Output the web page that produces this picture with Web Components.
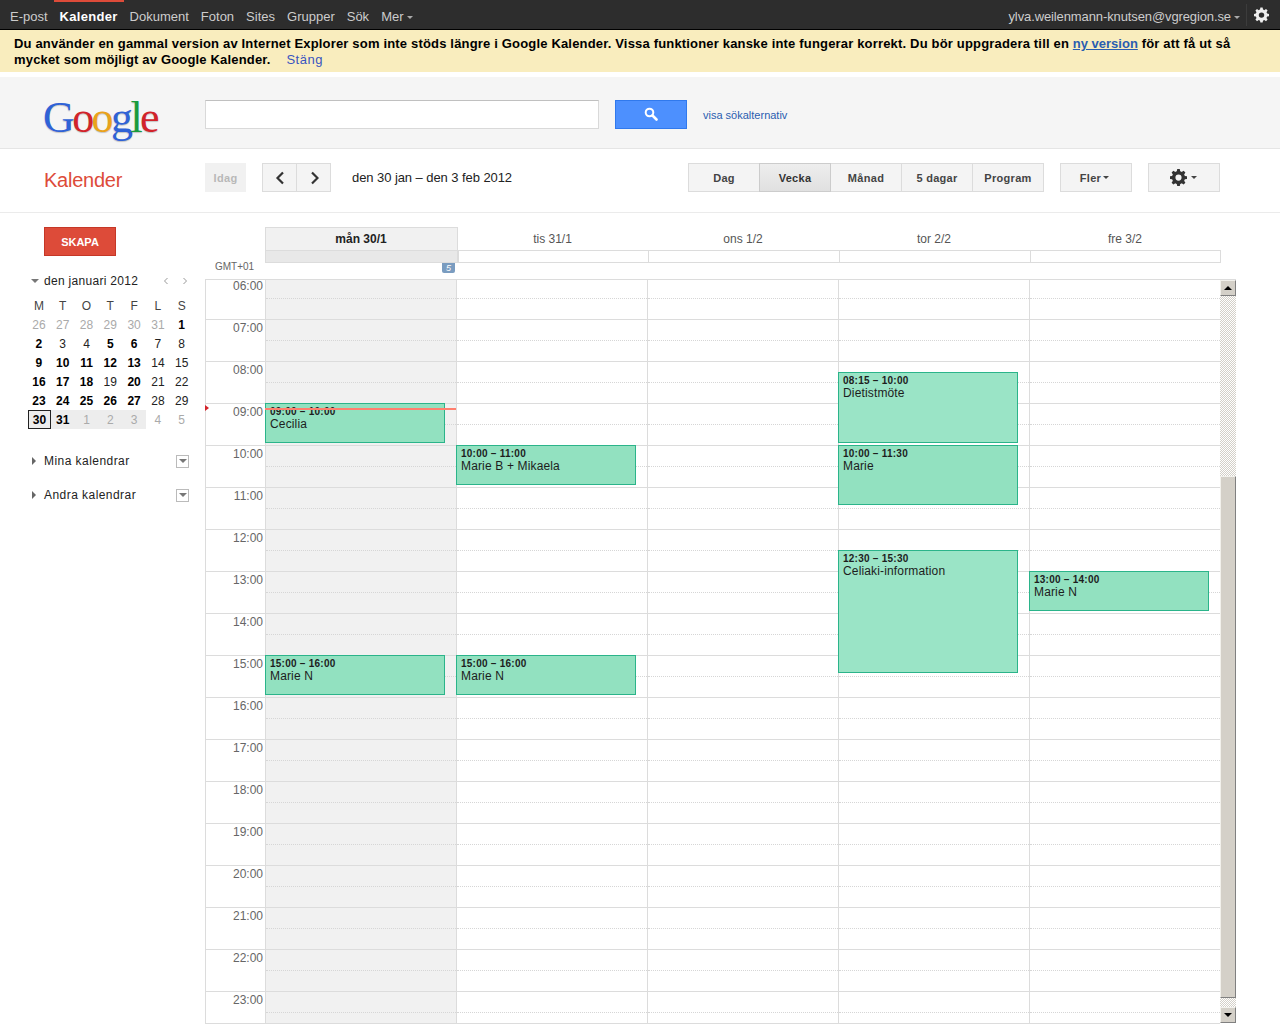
<!DOCTYPE html>
<html lang="sv">
<head>
<meta charset="utf-8">
<title>Google Kalender</title>
<style>
  html, body { margin: 0; padding: 0; background: #fff; }
  body { width: 1280px; height: 1024px; overflow: hidden; font-family: "Liberation Sans", Arial, sans-serif; }
</style>
</head>
<body>
<top-bar></top-bar>
<notice-bar></notice-bar>
<search-header></search-header>
<nav-toolbar></nav-toolbar>
<main-area>
  <side-panel></side-panel>
  <week-view></week-view>
</main-area>

<script>
const GEAR = 'M8.2 0h-2.4l-.4 2.1c-.5.2-1 .4-1.4.7L2.2 1.6.5 3.3l1.2 1.8c-.3.4-.5.9-.7 1.4L-1 6.9v2.4l2 .4c.2.5.4 1 .7 1.4L.5 12.9l1.7 1.7 1.8-1.2c.4.3.9.5 1.4.7l.4 2h2.4l.4-2c.5-.2 1-.4 1.4-.7l1.8 1.2 1.7-1.7-1.2-1.8c.3-.4.5-.9.7-1.4l2-.4V6.9l-2-.4c-.2-.5-.4-1-.7-1.4l1.2-1.8-1.7-1.7L10 2.8c-.4-.3-.9-.5-1.4-.7zM7 5.2a2.9 2.9 0 1 1 0 5.8 2.9 2.9 0 0 1 0-5.8z';

class TopBar extends HTMLElement {
  connectedCallback() {
    const links = ['E-post', 'Kalender', 'Dokument', 'Foton', 'Sites', 'Grupper', 'Sök'];
    this.attachShadow({ mode: 'open' }).innerHTML = `
      <style>
        :host { display: flex; justify-content: space-between; align-items: center; height: 29px; background: #2d2d2d; border-bottom: 1px solid #000; color: #ccc; font-size: 13px; padding: 0 0 0 10px; box-sizing: content-box; position: relative; width: 1270px; }
        .links { display: flex; gap: 12px; align-items: center; padding-top: 4px; }
        .links span.on { color: #fff; font-weight: bold; position: relative; letter-spacing: .3px; }
        .links span.on::before { content: ''; position: absolute; left: -6px; right: -6px; top: -9px; height: 2px; background: #dd4b39; }
        .caret { display: inline-block; width: 0; height: 0; border: 3px solid transparent; border-top-color: #aaa; border-bottom: 0; margin-left: 3px; vertical-align: 2px; }
        .right { display: flex; align-items: center; padding-top: 4px; }
        .mail { letter-spacing: -.11px; }
        .sep { width: 1px; height: 22px; background: #3c3c3c; margin: -4px 7px 0 6px; }
        svg { display: block; margin: -4px 11px 0 0; }
      </style>
      <div class="links">
        ${links.map(l => `<span class="${l === 'Kalender' ? 'on' : ''}">${l}</span>`).join('')}
        <span>Mer<i class="caret"></i></span>
      </div>
      <div class="right">
        <span class="mail">ylva.weilenmann-knutsen@vgregion.se<i class="caret"></i></span>
        <div class="sep"></div>
        <svg width="15" height="16" viewBox="-1 0 16 16"><path fill="#eee" fill-rule="evenodd" d="${GEAR}"/></svg>
      </div>`;
  }
}

class NoticeBar extends HTMLElement {
  connectedCallback() {
    this.attachShadow({ mode: 'open' }).innerHTML = `
      <style>
        :host { display: block; box-sizing: border-box; height: 42px; margin-bottom: 5px; padding: 6px 14px 0; background: #f9edbe; color: #000; font-size: 13px; line-height: 16px; font-weight: bold; letter-spacing: .175px; }
        a { color: #2a5db0; letter-spacing: 0; }
        .close { text-decoration: none; color: #3a55c0; font-weight: normal; margin-left: 12px; letter-spacing: .5px; }
        .line { white-space: nowrap; }
      </style>
      <div class="line">Du använder en gammal version av Internet Explorer som inte stöds längre i Google Kalender. Vissa funktioner kanske inte fungerar korrekt. Du bör uppgradera till en <a href="#">ny version</a> för att få ut så</div>
      <div class="line">mycket som möjligt av Google Kalender. <a class="close" href="#">Stäng</a></div>`;
  }
}

class SearchHeader extends HTMLElement {
  connectedCallback() {
    this.attachShadow({ mode: 'open' }).innerHTML = `
      <style>
        :host { display: flex; align-items: center; box-sizing: border-box; height: 72px; background: #f5f5f5; border-bottom: 1px solid #e5e5e5; padding: 3px 0 0 43px; }
        .logo { width: 162px; font: 44px/1 "Liberation Serif", "Times New Roman", serif; letter-spacing: -2.6px; text-shadow: 0 1px 1px rgba(0,0,0,.2); padding-top: 7px; }
        .b { color: #2f62d6; } .r { color: #d2232a; } .y { color: #eaa21b; } .g { color: #1a9b3c; }
        input { box-sizing: border-box; width: 394px; height: 29px; background: #fff; border: 1px solid #d9d9d9; border-top-color: #c0c0c0; padding: 0; margin: 0; outline: 0; }
        button { box-sizing: border-box; width: 72px; height: 29px; margin-left: 16px; background: #4d90fe; border: 1px solid #3079ed; display: flex; align-items: center; justify-content: center; padding: 0; }
        a { margin-left: 16px; padding-top: 2px; font-size: 11px; color: #2a5db0; text-decoration: none; }
      </style>
      <div class="logo"><span class="b">G</span><span class="r">o</span><span class="y">o</span><span class="b">g</span><span class="g">l</span><span class="r">e</span></div>
      <input type="text" aria-label="Sök">
      <button aria-label="Sök"><svg width="14" height="14" viewBox="0 0 14 14"><circle cx="5.5" cy="5.5" r="3.8" fill="none" stroke="#fff" stroke-width="2"/><path d="M8.5 8.5l4 4" stroke="#fff" stroke-width="2.6" stroke-linecap="round"/></svg></button>
      <a href="#">visa sökalternativ</a>`;
  }
}

class NavToolbar extends HTMLElement {
  connectedCallback() {
    const views = ['Dag', 'Vecka', 'Månad', '5 dagar', 'Program'];
    this.attachShadow({ mode: 'open' }).innerHTML = `
      <style>
        :host { display: flex; align-items: flex-start; box-sizing: border-box; height: 64px; border-bottom: 1px solid #ebebeb; padding: 14px 0 0 44px; color: #222; }
        .title { width: 161px; color: #dd4b39; font-size: 20px; letter-spacing: -.25px; line-height: 29px; padding-top: 3px; }
        .btn { box-sizing: border-box; height: 29px; background: #f4f4f4; border: 1px solid #dcdcdc; display: flex; align-items: center; justify-content: center; font-size: 11px; font-weight: bold; color: #444; letter-spacing: .3px; }
        .today { width: 41px; border-color: #f1f1f1; background: #f1f1f1; color: #b8b8b8; margin-right: 16px; }
        .arrow { width: 35px; }
        .arrow + .arrow { margin-left: -1px; }
        .range { font-size: 13px; line-height: 29px; letter-spacing: -.07px; margin: 0 176px 0 21px; width: 160px; white-space: nowrap; }
        .views { display: flex; }
        .views .btn { width: 72px; margin-right: -1px; }
        .views .on { background: linear-gradient(#eee, #e0e0e0); border-color: #ccc; color: #333; position: relative; z-index: 1; }
        .more { width: 72px; margin-left: 17px; padding-right: 3px; }
        .gear { width: 72px; margin-left: 16px; gap: 4px; padding-right: 1px; }
        .tri { display: inline-block; width: 0; height: 0; border: 3.5px solid transparent; border-top-color: #444; border-bottom: 0; }
        .more .tri { margin-left: 2px; }
      </style>
      <div class="title">Kalender</div>
      <div class="btn today">Idag</div>
      <div class="btn arrow"><svg width="10" height="14" viewBox="0 0 10 14"><path d="M8 1.5L2.5 7 8 12.5" fill="none" stroke="#333" stroke-width="2.2"/></svg></div>
      <div class="btn arrow"><svg width="10" height="14" viewBox="0 0 10 14"><path d="M3 1.5L8.5 7 3 12.5" fill="none" stroke="#333" stroke-width="2.2"/></svg></div>
      <div class="range">den 30 jan – den 3 feb 2012</div>
      <div class="views">
        ${views.map(v => `<div class="btn ${v === 'Vecka' ? 'on' : ''}">${v}</div>`).join('')}
      </div>
      <div class="btn more">Fler<i class="tri"></i></div>
      <div class="btn gear"><svg width="17" height="17" viewBox="-1 0 16 16"><path fill="#333" fill-rule="evenodd" d="${GEAR}"/></svg><i class="tri"></i></div>`;
  }
}

class MainArea extends HTMLElement {
  connectedCallback() {
    this.attachShadow({ mode: 'open' }).innerHTML = `
      <style>:host { display: flex; height: 811px; overflow: hidden; }</style>
      <slot></slot>`;
  }
}

class MiniCal extends HTMLElement {
  connectedCallback() {
    const heads = ['M', 'T', 'O', 'T', 'F', 'L', 'S'];
    // d = text, c = class: o other month, b bold (has events), w selected week
    const days = [
      ['26','o'],['27','o'],['28','o'],['29','o'],['30','o'],['31','o'],['1','b'],
      ['2','b'],['3',''],['4',''],['5','b'],['6','b'],['7',''],['8',''],
      ['9','b'],['10','b'],['11','b'],['12','b'],['13','b'],['14',''],['15',''],
      ['16','b'],['17','b'],['18','b'],['19',''],['20','b'],['21',''],['22',''],
      ['23','b'],['24','b'],['25','b'],['26','b'],['27','b'],['28',''],['29',''],
      ['30','b t'],['31','b w'],['1','o w'],['2','o w'],['3','o w'],['4','o'],['5','o']
    ];
    this.attachShadow({ mode: 'open' }).innerHTML = `
      <style>
        :host { display: block; font-size: 12px; color: #222; }
        .title { display: flex; align-items: center; height: 20px; margin-bottom: 5px; }
        .drop { flex: none; width: 0; height: 0; border: 4px solid transparent; border-top-color: #777; border-bottom: 0; margin: 0 5px 0 3px; }
        .name { flex: none; width: 116px; white-space: nowrap; letter-spacing: .3px; }
        .nav { flex: none; width: 12px; display: flex; justify-content: center; }
        .nav + .nav { margin-left: 7px; }
        .grid { display: grid; grid-template-columns: repeat(7, 23.8px); grid-auto-rows: 19px; margin-left: -1px; }
        .grid span { display: flex; align-items: center; justify-content: center; box-sizing: border-box; }
        .o { color: #aaa; } .b { font-weight: bold; color: #000; }
        .w { background: #ededed; }
        .t { border: 1px solid #222; background: #ededed; margin-left: 1px; }
        .h { color: #444; }
      </style>
      <div class="title">
        <div class="drop"></div>
        <div class="name">den januari 2012</div>
        <div class="nav"><svg width="6" height="8" viewBox="0 0 6 8"><path d="M4.5 1L1.5 4l3 3" fill="none" stroke="#999"/></svg></div>
        <div class="nav"><svg width="6" height="8" viewBox="0 0 6 8"><path d="M1.5 1l3 3-3 3" fill="none" stroke="#999"/></svg></div>
      </div>
      <div class="grid">
        ${heads.map(h => `<span class="h">${h}</span>`).join('')}
        ${days.map(d => `<span class="${d[1]}">${d[0]}</span>`).join('')}
      </div>`;
  }
}

class CalSection extends HTMLElement {
  connectedCallback() {
    this.attachShadow({ mode: 'open' }).innerHTML = `
      <style>
        :host { display: flex; align-items: center; height: 14px; font-size: 12px; color: #222; }
        .tri { width: 0; height: 0; border: 4px solid transparent; border-left-color: #666; border-right: 0; margin: 0 8px 0 4px; }
        .label { flex: 1; letter-spacing: .45px; }
        .box { box-sizing: border-box; width: 13px; height: 13px; border: 1px solid #bbb; display: flex; align-items: center; justify-content: center; background: #fff; }
        .box i { width: 0; height: 0; border: 4px solid transparent; border-top-color: #777; border-bottom: 0; }
      </style>
      <i class="tri"></i><span class="label"><slot></slot></span><div class="box"><i></i></div>`;
  }
}

class SidePanel extends HTMLElement {
  connectedCallback() {
    this.attachShadow({ mode: 'open' }).innerHTML = `
      <style>
        :host { display: block; box-sizing: border-box; width: 205px; padding: 14px 16px 0 28px; flex: none; }
        .create { box-sizing: border-box; width: 72px; height: 29px; margin-left: 16px; background: #dd4b39; border: 1px solid #c53727; color: #fff; font-size: 11px; font-weight: bold; display: flex; align-items: center; justify-content: center; }
        mini-cal { margin-top: 15px; }
        cal-section { margin-top: 25px; }
        cal-section + cal-section { margin-top: 20px; }
      </style>
      <div class="create">SKAPA</div>
      <mini-cal></mini-cal>
      <cal-section>Mina kalendrar</cal-section>
      <cal-section>Andra kalendrar</cal-section>`;
  }
}

class CalEvent extends HTMLElement {
  connectedCallback() {
    const time = this.getAttribute('time');
    const [a, b] = time.split(' – ').map(t => {
      const [h, m] = t.split(':').map(Number);
      return (h - 6) * 60 + m;
    });
    this.style.top = Math.round(a * 0.7) + 'px';
    this.style.height = (Math.floor((b - a) * 0.7) - 2) + 'px';
    this.attachShadow({ mode: 'open' }).innerHTML = `
      <style>
        :host { display: block; position: absolute; left: -1px; width: 180px; box-sizing: border-box; background: #92e1c0; border: 1px solid #2bb48a; color: #1d1d1d; overflow: hidden; padding: 0; }
        :host([light]) { background: #9ae4c6; }
        .time { font-size: 10px; font-weight: bold; line-height: 12px; padding: 2px 0 0 4px; letter-spacing: .25px; }
        .what { font-size: 12px; line-height: 13px; padding-left: 4px; letter-spacing: .15px; }
      </style>
      <div class="time">${time}</div>
      <div class="what"><slot></slot></div>`;
  }
}

class WeekView extends HTMLElement {
  connectedCallback() {
    const hours = [];
    for (let h = 6; h < 24; h++) hours.push(String(h).padStart(2, '0') + ':00');
    const rows = hours.map(() => '<div class="hour"></div>').join('');
    this.attachShadow({ mode: 'open' }).innerHTML = `
      <style>
        :host { display: block; flex: none; width: 1075px; padding-top: 14px; box-sizing: border-box; position: relative; }
        .names, .allday { display: grid; grid-template-columns: 60px 193px 190px 191px 191px 191px; }
        .names { height: 23px; font-size: 12px; color: #555; }
        .names div { display: flex; align-items: center; justify-content: center; box-sizing: border-box; padding-right: 1px; }
        .names .now { background: #f1f1f1; border: 1px solid #dcdcdc; border-bottom: 0; font-weight: bold; color: #222; }
        .allday { height: 13px; box-sizing: border-box; }
        .allday div { border: solid #dcdcdc; border-width: 1px 0 1px 1px; box-sizing: border-box; }
        .allday div:first-child { border: 0; }
        .allday div:last-child { border-right-width: 1px; }
        .allday .now { background: #e8e8e8; border-right: 1px solid #dcdcdc; }
        .gmt { display: flex; align-items: flex-start; height: 16px; padding-left: 10px; font-size: 10px; color: #666; }
        .gmt span:first-child { width: 227px; margin-top: -1px; line-height: 9px; }
        .badge { box-sizing: border-box; width: 13px; height: 10px; background: #7a9cc0; color: #fff; font-size: 9px; line-height: 10px; text-align: center; font-style: italic; border-radius: 0 0 2px 2px; }
        .body { display: flex; width: 1031px; border-top: 1px solid #dcdcdc; height: 745px; box-sizing: border-box; position: relative; }
        .grid { position: relative; width: 1015px; height: 744px; box-sizing: border-box; border-left: 1px solid #dcdcdc; border-bottom: 1px solid #dcdcdc; overflow: hidden; }
        .cols { display: grid; grid-template-columns: 59px 191px 191px 191px 191px 191px; margin-top: -3px; }
        .col { position: relative; }
        .day { border-left: 1px solid #dcdcdc; box-sizing: border-box; }
        .day.today { background: #f1f1f1; }
        .hour { height: 42px; box-sizing: border-box; border-top: 1px solid #dcdcdc; position: relative; }
        .hour::after { content: ''; position: absolute; left: 0; right: 0; top: 20px; border-top: 1px dotted #d6d6d6; }
        .times .hour { font-size: 12px; color: #666; text-align: right; padding: 1px 2px 0 0; line-height: 14px; }
        .times .hour::after { display: none; }
        .nowline { position: absolute; left: -1px; right: 0; top: 131px; height: 2px; background: #ff7f6e; z-index: 2; }
        .marker { position: absolute; left: 0; top: 125px; width: 0; height: 0; border: 3.5px solid transparent; border-left: 4px solid #d2232a; border-right: 0; z-index: 2; }
      </style>
      <div class="names">
        <div></div><div class="now">mån 30/1</div><div>tis 31/1</div><div>ons 1/2</div><div>tor 2/2</div><div>fre 3/2</div>
      </div>
      <div class="allday"><div></div><div class="now"></div><div></div><div></div><div></div><div></div></div>
      <div class="gmt"><span>GMT+01</span><span class="badge">5</span></div>
      <div class="body">
        <div class="grid">
          <div class="cols">
            <div class="col times">${hours.map(h => `<div class="hour">${h}</div>`).join('')}</div>
            <div class="col day today">${rows}<div class="nowline"></div><slot name="d0"></slot></div>
            <div class="col day">${rows}<slot name="d1"></slot></div>
            <div class="col day">${rows}<slot name="d2"></slot></div>
            <div class="col day">${rows}<slot name="d3"></slot></div>
            <div class="col day">${rows}<slot name="d4"></slot></div>
          </div>
        </div>
        <div class="marker"></div>
        <fake-scrollbar></fake-scrollbar>
      </div>`;
    this.innerHTML = `
      <cal-event slot="d0" time="09:00 – 10:00">Cecilia</cal-event>
      <cal-event slot="d0" time="15:00 – 16:00">Marie N</cal-event>
      <cal-event slot="d1" time="10:00 – 11:00">Marie B + Mikaela</cal-event>
      <cal-event slot="d1" time="15:00 – 16:00">Marie N</cal-event>
      <cal-event slot="d3" light time="08:15 – 10:00">Dietistmöte</cal-event>
      <cal-event slot="d3" time="10:00 – 11:30">Marie</cal-event>
      <cal-event slot="d3" light time="12:30 – 15:30">Celiaki-information</cal-event>
      <cal-event slot="d4" time="13:00 – 14:00">Marie N</cal-event>`;
  }
}

class FakeScrollbar extends HTMLElement {
  connectedCallback() {
    this.attachShadow({ mode: 'open' }).innerHTML = `
      <style>
        :host { display: flex; flex-direction: column; width: 16px; height: 743px; flex: none; }
        .btn, .thumb { box-sizing: border-box; background: #d4d0c8; border: 1px solid; border-color: #f2f1ec #808080 #808080 #f2f1ec; }
        .btn { height: 16px; display: flex; align-items: center; justify-content: center; }
        .up { width: 0; height: 0; border: 4px solid transparent; border-bottom-color: #000; border-top: 0; }
        .down { width: 0; height: 0; border: 4px solid transparent; border-top-color: #000; border-bottom: 0; }
        .track { background: conic-gradient(#d4d0c8 25%, #fff 0 50%, #d4d0c8 0 75%, #fff 0) 0 0 / 2px 2px; }
        .thumb { height: 522px; }
      </style>
      <div class="btn"><i class="up"></i></div>
      <div class="track" style="height:180px"></div>
      <div class="thumb"></div>
      <div class="track" style="height:9px"></div>
      <div class="btn"><i class="down"></i></div>`;
  }
}

customElements.define('top-bar', TopBar);
customElements.define('notice-bar', NoticeBar);
customElements.define('search-header', SearchHeader);
customElements.define('nav-toolbar', NavToolbar);
customElements.define('main-area', MainArea);
customElements.define('mini-cal', MiniCal);
customElements.define('cal-section', CalSection);
customElements.define('side-panel', SidePanel);
customElements.define('cal-event', CalEvent);
customElements.define('week-view', WeekView);
customElements.define('fake-scrollbar', FakeScrollbar);
</script>
</body>
</html>
